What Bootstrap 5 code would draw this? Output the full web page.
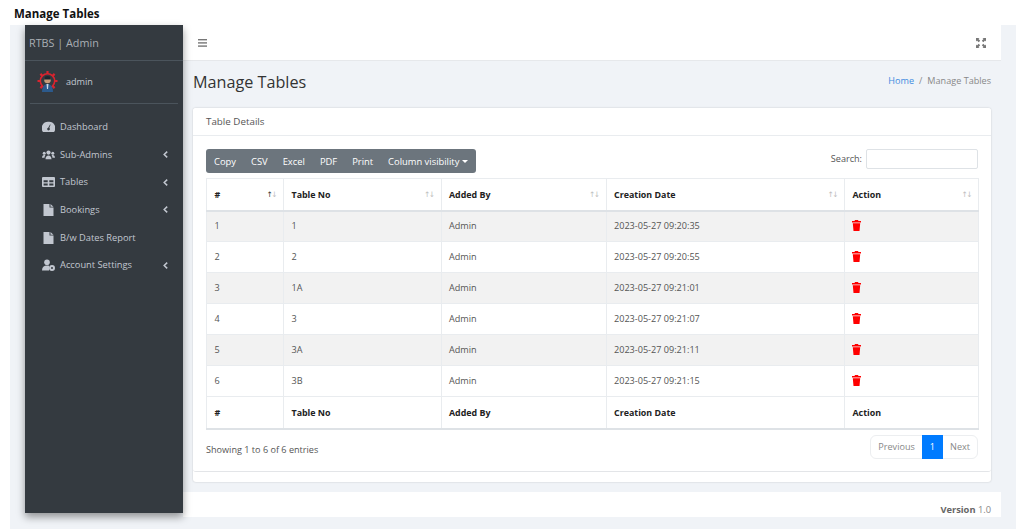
<!DOCTYPE html>
<html lang="en">
<head>
  <meta charset="UTF-8">
  <title>Manage Tables</title>
  <meta name="viewport" content="width=device-width, initial-scale=1">
  <link href="https://cdn.jsdelivr.net/npm/bootstrap@5.3.3/dist/css/bootstrap.min.css" rel="stylesheet">
  <style>
    html, body { height: 529px; overflow: hidden; }
    body { font-family: "Open Sans", "Liberation Sans", sans-serif; font-size: 9.1px; background: #fff; color: #555; }
    .doc-title { font-weight: 700; font-size: 11.5px; color: #111; height: 25px; padding: 6px 0 0 14px; line-height: 15px; }
    .app-frame { margin-left: 10px; width: 1006px; height: 504px; background: #f0f3f7; padding: 0 15px 0 15px; }
    .side-panel { width: 158px; height: 488px; background: #343a40; color: #c2c7d0; box-shadow: 0 4px 8px rgba(0,0,0,.4); flex: none; position: relative; z-index: 2; }
    .side-brand { height: 36px; padding: 0 4px; font-size: 10.8px; color: #a9aeb4; line-height: 35px; border-bottom: 1px solid #4b545c; }
    .side-user { height: 43px; margin: 0 5px; padding-left: 7px; gap: 8px; border-bottom: 1px solid #4b545c; font-size: 9.1px; }
    .side-menu { padding-top: 9.4px; }
    .side-link { height: 27.6px; padding: 0 15px 0 17px; gap: 5px; color: #c2c7d0; font-size: 9.3px; text-decoration: none; }
    .side-link svg.ico { width: 13px; height: 12px; fill: #c2c7d0; flex: none; }
    .side-link .chev { margin-left: auto; width: 5px; height: 7px; fill: none; stroke: #c2c7d0; stroke-width: 1.5; }
    .main-col { min-width: 0; }
    .top-bar { height: 36px; background: #fff; border-bottom: 1px solid #e6e8eb; padding: 0 15px 0 15px; }
    .head-row { height: 47px; padding: 11px 10px 0; align-items: flex-start; }
    .head-row h1 { font-size: 16.2px; font-weight: 400; color: #333; margin: 0; line-height: 20px; }
    .breadcrumb { font-size: 9.1px; margin-top: 2px; --bs-breadcrumb-item-padding-x: 5px; --bs-breadcrumb-divider-color: #888; }
    .breadcrumb a { color: #3f8be0; text-decoration: none; }
    .breadcrumb .active { color: #888; }
    .outer-box { margin: 0 10px; height: 374px; background: #fff; border-radius: 3px; box-shadow: 0 0 2px rgba(0,0,0,.2); }
    .inner-box { height: 364px; border: 0; border-bottom: 1px solid #e3e5e8; border-radius: 3px; background: #fff; }
    .inner-box .card-header { height: 28px; background: #fff; padding: 0 13px; font-size: 9.8px; line-height: 27px; color: #555; border-bottom: 1px solid #e9ecef; }
    .inner-box .card-body { padding: 13px 13px 0; }
    .tool-row { height: 29px; }
    .export-btns { background: #6c757d; border-radius: 3px; height: 24px; }
    .export-btns .btn { font-size: 9.4px; padding: 1px 8px 0; color: #fff; border: 0; background: transparent; line-height: 23px; white-space: nowrap; }
    .export-btns .dropdown-toggle::after { border-top-width: 3.500px; border-left-width: 3px; border-right-width: 3px; margin-left: 3px; }
    .search-box { gap: 4px; height: 24px; align-items: flex-start; color: #555; line-height: 19px; }
    .search-input { width: 112px; height: 20px; border: 1px solid #dee2e6; border-radius: 2px; padding: 0; font-size: 9px; }
    .data-tbl { table-layout: fixed; width: 772px; margin: 0; font-size: 9.1px; color: #555; --bs-table-striped-bg: #f2f2f2; --bs-table-striped-color: #555; --bs-table-color: #555; --bs-border-color: #e9ecef; }
    .data-tbl th, .data-tbl td { padding: 0 7.5px; vertical-align: middle; height: 31px; }
    .data-tbl th { color: #222; font-weight: 700; font-size: 8.9px; position: relative; }
    .data-tbl thead th { height: 32px; border-bottom: 2px solid #dee2e6; }
    .data-tbl tfoot th { height: 32px; border-bottom: 2px solid #dee2e6; }
    .sort-arrows { position: absolute; right: 7px; top: 10px; font-family: "DejaVu Sans", sans-serif; font-size: 7.5px; font-weight: 400; color: #bdbdbd; letter-spacing: -1.500px; }
    .sort-arrows b { color: #333; font-weight: 400; }
    .col-a { width: 77px; } .col-b { width: 157.5px; } .col-c { width: 165px; } .col-d { width: 238.5px; } .col-e { width: 134px; }
    .bin { width: 9px; height: 11px; fill: #f00; display: block; margin: -2px 0 0 -1px; }
    .foot-row { padding-top: 5px; color: #555; align-items: flex-start; }
    .foot-row > span { margin-top: 8px; }
    .pagination { --bs-pagination-font-size: 9.1px; --bs-pagination-padding-x: 7px; --bs-pagination-padding-y: 0; --bs-pagination-color: #888; --bs-pagination-disabled-color: #888; --bs-pagination-bg: #fff; --bs-pagination-disabled-bg: #fff; --bs-pagination-border-color: #eceef0; --bs-pagination-disabled-border-color: #eceef0; --bs-pagination-active-bg: #007bff; --bs-pagination-active-border-color: #007bff; margin: 0; }
    .pagination .page-link { line-height: 22px; height: 24px; }
    .foot-bar { margin-top: 10px; height: 25px; background: #fff; padding: 0 10px; line-height: 36px; font-size: 9.3px; color: #888; overflow: hidden; }
    .foot-bar b { color: #666; }
  </style>
</head>
<body>
  <div class="doc-title">Manage Tables</div>
  <div class="app-frame d-flex">
    <aside class="side-panel">
      <div class="side-brand">RTBS | Admin</div>
      <div class="side-user d-flex align-items-center">
        <svg width="21" height="22" viewBox="0 0 21 22">
          <g stroke="#d8242f" stroke-width="2.200">
            <path d="M10.500 0v4M10.500 16v4M.5 10h4M16.500 10h4M3.400 2.900l2.800 2.800M14.800 14.300l2.800 2.800M17.600 2.900l-2.800 2.800M6.200 14.300l-2.800 2.800"/>
          </g>
          <circle cx="10.500" cy="10" r="7.200" fill="#343a40" stroke="#d8242f" stroke-width="1.600"/>
          <circle cx="10.500" cy="9" r="3.300" fill="#c89a78"/>
          <path d="M7.100 8.500a3.400 3.400 0 0 1 6.800 0z" fill="#1d2630"/>
          <path d="M5 21c0-5.500 2.500-8 5.500-8s5.500 2.500 5.500 8z" fill="#2c5a8c"/>
          <path d="M9.500 13h2l-.5 5h-1z" fill="#cfd8e2"/>
        </svg>
        <span>admin</span>
      </div>
      <nav class="side-menu">
        <a class="side-link d-flex align-items-center" href="#">
          <svg class="ico" viewBox="0 0 13 12"><path fill-rule="evenodd" d="M6.500.8A6.300 6.300 0 0 0 1 10.900h11A6.300 6.300 0 0 0 6.500.8zM8.600 3.600 7.300 7a1.300 1.300 0 1 1-1.100-.2L8 3.400z"/></svg>
          <span>Dashboard</span>
        </a>
        <a class="side-link d-flex align-items-center" href="#">
          <svg class="ico" viewBox="0 0 13 12"><circle cx="6.500" cy="3.600" r="2.100"/><circle cx="2.200" cy="4.300" r="1.500"/><circle cx="10.800" cy="4.300" r="1.500"/><path d="M3.500 10.300c0-2.600 1.300-3.800 3-3.800s3 1.200 3 3.800zM0 8.700c0-1.700.9-2.800 2.200-2.800.5 0 .9.100 1.200.3-.6.700-.9 1.500-.9 2.500zM13 8.700c0-1.700-.9-2.800-2.200-2.800-.5 0-.9.100-1.200.3.600.7.900 1.500.9 2.500z"/></svg>
          <span>Sub-Admins</span><svg class="chev" viewBox="0 0 5 7"><path d="M4.200.6 1.200 3.500l3 2.900"/></svg>
        </a>
        <a class="side-link d-flex align-items-center" href="#">
          <svg class="ico" viewBox="0 0 13 12"><path fill-rule="evenodd" d="M1 1h11a1 1 0 0 1 1 1v8a1 1 0 0 1-1 1H1a1 1 0 0 1-1-1V2a1 1 0 0 1 1-1zm.6 3.200v2h4.100v-2zm5.700 0v2h4.100v-2zM1.600 7.500v2h4.100v-2zm5.700 0v2h4.100v-2z"/></svg>
          <span>Tables</span><svg class="chev" viewBox="0 0 5 7"><path d="M4.200.6 1.200 3.500l3 2.900"/></svg>
        </a>
        <a class="side-link d-flex align-items-center" href="#">
          <svg class="ico" viewBox="0 0 13 12"><path d="M1.500 0h6v3.500H11.500V12h-10zM8.500 0l3 2.700h-3z"/></svg>
          <span>Bookings</span><svg class="chev" viewBox="0 0 5 7"><path d="M4.200.6 1.200 3.500l3 2.900"/></svg>
        </a>
        <a class="side-link d-flex align-items-center" href="#">
          <svg class="ico" viewBox="0 0 13 12"><path d="M1.500 0h6v3.500H11.500V12h-10zM8.500 0l3 2.700h-3z"/></svg>
          <span>B/w Dates Report</span>
        </a>
        <a class="side-link d-flex align-items-center" href="#">
          <svg class="ico" viewBox="0 0 13 12"><circle cx="5" cy="3.200" r="2.800"/><path d="M0 11.500c0-3.300 1.900-5 5-5 .9 0 1.500.1 2 .3v4.700z"/><path fill-rule="evenodd" d="M10 6a3 3 0 1 0 0 6 3 3 0 0 0 0-6zm0 2a1 1 0 1 1 0 2 1 1 0 0 1 0-2z"/></svg>
          <span>Account Settings</span><svg class="chev" viewBox="0 0 5 7"><path d="M4.200.6 1.200 3.500l3 2.900"/></svg>
        </a>
      </nav>
    </aside>
    <div class="main-col flex-grow-1">
      <div class="top-bar d-flex align-items-center justify-content-between">
        <svg width="9" height="8" viewBox="0 0 9 8" fill="#777"><rect width="9" height="1.400"/><rect y="3.200" width="9" height="1.400"/><rect y="6.400" width="9" height="1.400"/></svg>
        <svg width="10" height="10" viewBox="0 0 10 10" fill="#777"><path d="M0 0h3.500L2.500 1l1.700 1.700-1.500 1.500L1 2.500 0 3.500zM10 0v3.500L9 2.500 7.300 4.200 5.800 2.700 7.500 1 6.500 0zM0 10V6.500L1 7.500l1.700-1.700 1.500 1.500L2.500 9l1 1zM10 10H6.500L7.500 9 5.800 7.300l1.500-1.500L9 7.500l1-1z"/></svg>
      </div>
      <div class="head-row d-flex justify-content-between">
        <h1>Manage Tables</h1>
        <ol class="breadcrumb mb-0">
          <li class="breadcrumb-item"><a href="#">Home</a></li>
          <li class="breadcrumb-item active">Manage Tables</li>
        </ol>
      </div>
      <div class="outer-box">
        <div class="card inner-box">
          <div class="card-header">Table Details</div>
          <div class="card-body">
            <div class="tool-row d-flex justify-content-between">
              <div class="export-btns btn-group">
                <button class="btn" type="button">Copy</button>
                <button class="btn" type="button">CSV</button>
                <button class="btn" type="button">Excel</button>
                <button class="btn" type="button">PDF</button>
                <button class="btn" type="button">Print</button>
                <button class="btn dropdown-toggle" type="button">Column visibility</button>
              </div>
              <label class="search-box d-flex">Search: <input class="search-input" type="search"></label>
            </div>
            <table class="table table-bordered table-striped data-tbl">
              <colgroup><col class="col-a"><col class="col-b"><col class="col-c"><col class="col-d"><col class="col-e"></colgroup>
              <thead>
                <tr>
                  <th>#<span class="sort-arrows"><b>↑</b>↓</span></th>
                  <th>Table No<span class="sort-arrows">↑↓</span></th>
                  <th>Added By<span class="sort-arrows">↑↓</span></th>
                  <th>Creation Date<span class="sort-arrows">↑↓</span></th>
                  <th>Action<span class="sort-arrows">↑↓</span></th>
                </tr>
              </thead>
              <tbody id="rows"></tbody>
              <tfoot>
                <tr><th>#</th><th>Table No</th><th>Added By</th><th>Creation Date</th><th>Action</th></tr>
              </tfoot>
            </table>
            <div class="foot-row d-flex justify-content-between">
              <span>Showing 1 to 6 of 6 entries</span>
              <ul class="pagination">
                <li class="page-item disabled"><a class="page-link" href="#">Previous</a></li>
                <li class="page-item active"><a class="page-link" href="#">1</a></li>
                <li class="page-item"><a class="page-link" href="#">Next</a></li>
              </ul>
            </div>
          </div>
        </div>
      </div>
      <div class="foot-bar text-end"><b>Version</b> 1.0</div>
    </div>
  </div>
  <script>
    const data = [
      ["1", "1", "2023-05-27 09:20:35"],
      ["2", "2", "2023-05-27 09:20:55"],
      ["3", "1A", "2023-05-27 09:21:01"],
      ["4", "3", "2023-05-27 09:21:07"],
      ["5", "3A", "2023-05-27 09:21:11"],
      ["6", "3B", "2023-05-27 09:21:15"]
    ];
    const bin = '<svg class="bin" viewBox="0 0 9 11"><path d="M3 0h3l.5 1H9v1.400H0V1h2.500zM.8 3.200h7.400L7.500 11h-6z"/></svg>';
    document.getElementById("rows").innerHTML = data.map(r =>
      "<tr><td>" + r[0] + "</td><td>" + r[1] + "</td><td>Admin</td><td>" + r[2] + "</td><td>" + bin + "</td></tr>"
    ).join("");
  </script>
  <script src="https://cdn.jsdelivr.net/npm/bootstrap@5.3.3/dist/js/bootstrap.bundle.min.js"></script>
</body>
</html>
